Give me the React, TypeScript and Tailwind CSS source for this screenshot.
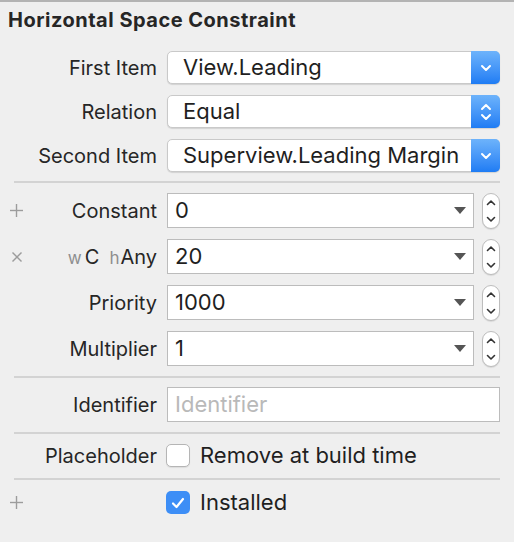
import React from 'react';

const font = { fontFamily: 'Inter, "Open Sans", sans-serif' };

function Label({ children }: { children: React.ReactNode }) {
    return <div className="w-[157px] shrink-0 text-right text-[20px] text-[#262626]">{children}</div>;
}

function Popup({ value, updown }: { value: string; updown?: boolean }) {
    return (
        <div className="flex h-[33px] flex-1 items-stretch rounded-[5px] border border-[#c9c9c9] bg-white shadow-[0_1px_1px_rgba(0,0,0,0.12)]">
            <div className="flex flex-1 items-center pl-[15px] text-[22px] text-[#1f1f1f]">{value}</div>
            <div className="-my-px -mr-px flex w-[29px] items-center justify-center rounded-r-[5px] bg-gradient-to-b from-[#6db3fb] to-[#1e7cf4]">
                {updown ? (
                    <svg width="12" height="20" viewBox="0 0 12 20" fill="none" stroke="white" strokeWidth="2" strokeLinecap="round" strokeLinejoin="round">
                        <polyline points="2,7 6,3 10,7" />
                        <polyline points="2,13 6,17 10,13" />
                    </svg>
                ) : (
                    <svg width="12" height="8" viewBox="0 0 12 8" fill="none" stroke="white" strokeWidth="2" strokeLinecap="round" strokeLinejoin="round">
                        <polyline points="2,2 6,6 10,2" />
                    </svg>
                )}
            </div>
        </div>
    );
}

function Combo({ value }: { value: string }) {
    return (
        <div className="flex h-[35px] flex-1 items-center gap-[8px]">
            <div className="flex h-[35px] flex-1 items-center border border-[#bcbcbc] bg-white pl-[7px] pr-[7px]">
                <span className="flex-1 text-[22px] text-[#1f1f1f]">{value}</span>
                <svg width="12" height="8" viewBox="0 0 12 8">
                    <polygon points="0,0 12,0 6,7" fill="#555555" />
                </svg>
            </div>
            <div className="flex h-[36px] w-[18px] flex-col items-center justify-between rounded-[9px] border border-[#bdbdbd] bg-white py-[5px] shadow-[0_1px_1px_rgba(0,0,0,0.1)]">
                <svg width="10" height="7" viewBox="0 0 10 7" fill="none" stroke="#333" strokeWidth="1.6" strokeLinecap="round" strokeLinejoin="round">
                    <polyline points="1.5,5.5 5,2 8.5,5.5" />
                </svg>
                <svg width="10" height="7" viewBox="0 0 10 7" fill="none" stroke="#333" strokeWidth="1.6" strokeLinecap="round" strokeLinejoin="round">
                    <polyline points="1.5,1.5 5,5 8.5,1.5" />
                </svg>
            </div>
        </div>
    );
}

function Separator({ className }: { className: string }) {
    return <div className={`ml-[14px] mr-[14px] h-[2px] bg-[#d3d3d3] ${className}`} />;
}

function Plus() {
    return (
        <svg width="13" height="13" viewBox="0 0 13 13" stroke="#9c9c9c" strokeWidth="1.4">
            <line x1="6.5" y1="0" x2="6.5" y2="13" />
            <line x1="0" y1="6.5" x2="13" y2="6.5" />
        </svg>
    );
}

function Cross() {
    return (
        <svg width="10" height="10" viewBox="0 0 10 10" stroke="#9c9c9c" strokeWidth="1.4">
            <line x1="0.5" y1="0.5" x2="9.5" y2="9.5" />
            <line x1="9.5" y1="0.5" x2="0.5" y2="9.5" />
        </svg>
    );
}

export default function App() {
    return (
        <div className="h-[542px] w-[514px] overflow-hidden border-t-2 border-[#b3b3b3] bg-[#efefef]" style={font}>
            <div className="pl-[8px] pt-[6px] text-[20px] font-bold leading-[24px] tracking-[0.5px] text-[#262626]">Horizontal Space Constraint</div>

            <div className="mt-[19px] flex flex-col gap-[11px] pr-[14px]">
                <div className="flex items-center gap-[10px]">
                    <Label>First Item</Label>
                    <Popup value="View.Leading" />
                </div>
                <div className="flex items-center gap-[10px]">
                    <Label>Relation</Label>
                    <Popup value="Equal" updown />
                </div>
                <div className="flex items-center gap-[10px]">
                    <Label>Second Item</Label>
                    <Popup value="Superview.Leading Margin" />
                </div>
            </div>

            <Separator className="mt-[9px]" />

            <div className="mt-[10px] flex flex-col gap-[11px] pr-[14px]">
                <div className="relative flex items-center gap-[10px]">
                    <div className="absolute left-[10px] top-[11px]"><Plus /></div>
                    <Label>Constant</Label>
                    <Combo value="0" />
                </div>
                <div className="relative flex items-center gap-[10px]">
                    <div className="absolute left-[12px] top-[13px]"><Cross /></div>
                    <Label>
                        <span className="mr-[3px] text-[17px] text-[#8e8e8e]">w</span>C
                        <span className="ml-[10px] mr-[1px] text-[17px] text-[#8e8e8e]">h</span>Any
                    </Label>
                    <Combo value="20" />
                </div>
                <div className="flex items-center gap-[10px]">
                    <Label>Priority</Label>
                    <Combo value="1000" />
                </div>
                <div className="flex items-center gap-[10px]">
                    <Label>Multiplier</Label>
                    <Combo value="1" />
                </div>
            </div>

            <Separator className="mt-[10px]" />

            <div className="mt-[9px] flex items-center gap-[10px] pr-[14px]">
                <Label>Identifier</Label>
                <div className="flex h-[35px] flex-1 items-center border border-[#bcbcbc] bg-white pl-[7px] text-[22px] text-[#b9b9b9]">
                    Identifier
                </div>
            </div>

            <Separator className="mt-[10px]" />

            <div className="mt-[10px] flex h-[23px] items-center gap-[9px] pr-[14px]">
                <Label>Placeholder</Label>
                <div className="h-[23px] w-[24px] rounded-[5px] border border-[#b5b5b5] bg-white shadow-[0_1px_1px_rgba(0,0,0,0.08)]" />
                <span className="ml-[1px] text-[22px] text-[#1f1f1f]">Remove at build time</span>
            </div>

            <Separator className="mt-[11px]" />

            <div className="relative mt-[11px] flex h-[23px] items-center gap-[9px] pr-[14px]">
                <div className="absolute left-[10px] top-[5px]"><Plus /></div>
                <div className="w-[157px] shrink-0" />
                <div className="flex h-[23px] w-[24px] items-center justify-center rounded-[5px] bg-[#3d8ef6]">
                    <svg width="14" height="12" viewBox="0 0 14 12" fill="none" stroke="white" strokeWidth="2.2" strokeLinecap="round" strokeLinejoin="round">
                        <polyline points="2,6.5 5.5,10 12,2" />
                    </svg>
                </div>
                <span className="ml-[1px] text-[22px] text-[#1f1f1f]">Installed</span>
            </div>
        </div>
    );
}
